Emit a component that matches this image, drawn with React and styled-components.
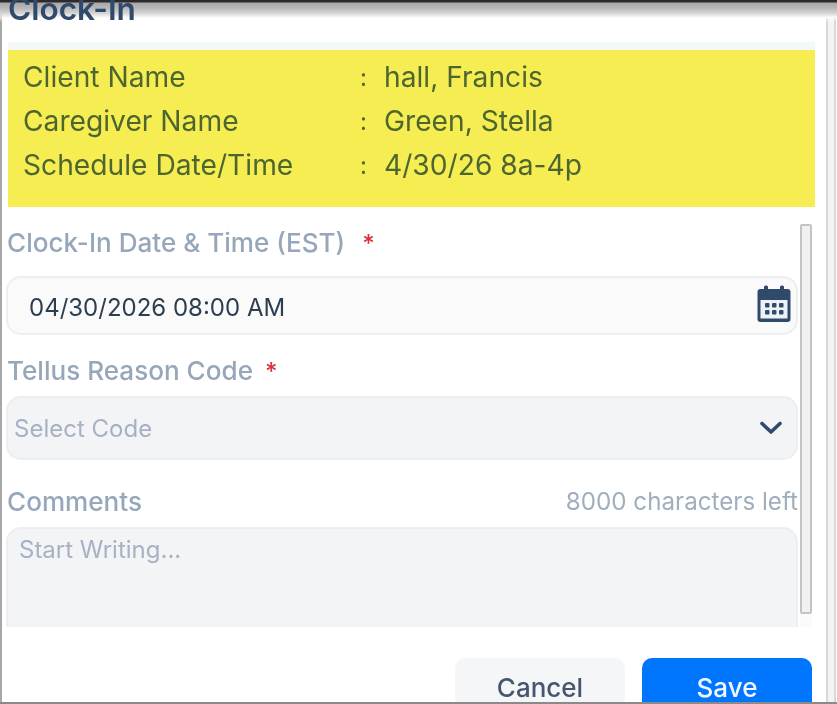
import React from "react";
import styled, { createGlobalStyle } from "styled-components";

const Global = createGlobalStyle`
  html, body { margin: 0; padding: 0; background: #fff; }
  * { box-sizing: border-box; }
  body { font-family: Inter, "Liberation Sans", sans-serif; overflow: hidden; }
`;

const Screen = styled.div`
  position: relative;
  width: 837px;
  height: 704px;
  overflow: hidden;
  display: flex;
  background: #fff;
  filter: blur(0.55px);
`;
const TopShade = styled.div`
  position: absolute;
  inset: 0 0 auto 0;
  height: 22px;
  background: linear-gradient(#2b2b2b 0, #2b2b2b 2px, #a8a8a8 3px, #b8b8b8 8px, #d4d4d4 13px, rgba(255,255,255,0.6) 18px, rgba(255,255,255,0) 22px);
  pointer-events: none;
`;
const BottomLine = styled.div`
  position: absolute;
  inset: auto 0 0 0;
  height: 2px;
  background: #8a8a8a;
`;
const Dialog = styled.div`
  width: 826px;
  height: 704px;
  flex: none;
  border-left: 2px solid #a8a8a8;
  display: flex;
  flex-direction: column;
`;
const OuterBar = styled.div`
  flex: 1;
  margin-top: 18px;
  border-left: 2px solid #d8d8d8;
  border-right: 2px solid #d8d8d8;
  background: #f4f4f4;
  margin-right: 1px;
`;
const Title = styled.h2`
  margin: -9px 0 9px 6px;
  height: 50px;
  flex: none;
  font-size: 31.5px;
  line-height: 36px;
  font-weight: 600;
  color: #2f4a6b;
  position: relative;
  z-index: 1;
`;
const Summary = styled.div`
  margin: 0 11px 0 6px;
  height: 157px;
  flex: none;
  padding: 5px 15px;
  background: #f6ed52;
  box-shadow: 0 -8px 0 #f5f8f8;
  display: grid;
  grid-template-columns: 337px 24px 1fr;
  grid-auto-rows: 44px;
  align-items: center;
  font-size: 28.2px;
  color: #4d6630;
`;
const Colon = styled.span`
  font-size: 24px;
`;
const Body = styled.div`
  height: 420px;
  flex: none;
  overflow: hidden;
  display: flex;
`;
const Form = styled.div`
  width: 796px;
  padding: 16px 0 0 4px;
  display: flex;
  flex-direction: column;
  flex: none;
`;
const LabelRow = styled.div`
  display: flex;
  justify-content: space-between;
  align-items: center;
  height: 38px;
  flex: none;
  padding: 0 0 0 1px;
  font-size: 26.1px;
  font-weight: 500;
  color: #97a7ba;
  white-space: nowrap;
`;
const Required = styled.span`
  color: #d6333f;
  margin-left: ${(p) => p.$gap}px;
  font-size: 24px;
`;
const Remaining = styled.span`
  font-size: 24.2px;
  font-weight: 400;
  color: #a1aebd;
`;
const Field = styled.div`
  height: ${(p) => p.$h}px;
  margin-top: ${(p) => p.$top}px;
  margin-bottom: ${(p) => p.$bottom}px;
  flex: none;
  border: 2px solid #eceef1;
  border-radius: 15px;
  background: ${(p) => p.$bg};
  display: flex;
  align-items: center;
  justify-content: space-between;
  padding: ${(p) => p.$nudge}px ${(p) => p.$right}px 0 ${(p) => p.$left}px;
  font-size: 24px;
  color: ${(p) => p.$color};
`;
const TextArea = styled.div`
  height: 130px;
  margin-top: 7px;
  flex: none;
  border: 2px solid #eceef1;
  border-radius: 15px;
  background: #f3f4f6;
  padding: 6px 11px;
  font-size: 24px;
  color: #a6b2c4;
`;
const Track = styled.div`
  width: 12px;
  height: 403px;
  margin-top: 17px;
  margin-left: 2px;
  flex: none;
  display: flex;
  flex-direction: column;
  background: #fbfbfb;
`;
const Thumb = styled.div`
  height: 390px;
  border: 2px solid #c4c4c4;
  border-radius: 2px;
  background: #f1f1f1;
`;
const Footer = styled.div`
  display: flex;
  flex: none;
  justify-content: flex-end;
  gap: 17px;
  margin: 31px 14px 0 0;
`;
const Button = styled.button`
  width: 170px;
  height: 60px;
  flex: none;
  border: 0;
  border-radius: 10px;
  padding: 0 0 2px;
  font-family: inherit;
  font-size: 26px;
  font-weight: 500;
  background: ${(p) => (p.$primary ? "#0076ff" : "#f5f6f7")};
  color: ${(p) => (p.$primary ? "#f2f7ff" : "#45566e")};
`;
const CalendarSvg = styled.svg`
  margin-bottom: 8px;
  flex: none;
`;

const CalendarIcon = () => (
  <CalendarSvg width="34" height="38" viewBox="0 0 34 38" aria-hidden="true">
    <rect x="0.5" y="4" width="33" height="33" rx="3" fill="#2f4a6b" />
    <rect x="7" y="0.5" width="4" height="7" rx="1.5" fill="#2f4a6b" />
    <rect x="23" y="0.5" width="4" height="7" rx="1.5" fill="#2f4a6b" />
    <rect x="3.5" y="15" width="27" height="18.5" fill="#eef2f6" />
    {[8, 15, 22].map((x) =>
      [18, 25].map((y) => <rect key={`${x}-${y}`} x={x} y={y} width="4.5" height="4.5" rx="1" fill="#2f4a6b" />)
    )}
  </CalendarSvg>
);

const ChevronIcon = () => (
  <svg width="22" height="14" viewBox="0 0 22 14" aria-hidden="true">
    <path d="M2 2.5 L11 11 L20 2.5" fill="none" stroke="#2f4a6b" strokeWidth="3.6" strokeLinecap="round" strokeLinejoin="round" />
  </svg>
);

const rows = [
  ["Client Name", "hall, Francis"],
  ["Caregiver Name", "Green, Stella"],
  ["Schedule Date/Time", "4/30/26 8a-4p"],
];

export default function App() {
  return (
    <Screen>
      <Global />
      <Dialog>
        <Title>Clock-In</Title>
        <Summary>
          {rows.map(([k, v]) => (
            <React.Fragment key={k}>
              <span>{k}</span>
              <Colon>:</Colon>
              <span>{v}</span>
            </React.Fragment>
          ))}
        </Summary>
        <Body>
          <Form>
            <LabelRow>
              <span>Clock-In Date &amp; Time (EST)<Required $gap={17}>*</Required></span>
            </LabelRow>
            <Field $h={59} $top={15} $bottom={16} $nudge={4} $bg="#fafafb" $left={21} $right={5} $color="#2c3e50">
              04/30/2026 08:00 AM
              <CalendarIcon />
            </Field>
            <LabelRow>
              <span>Tellus Reason Code<Required $gap={12}>*</Required></span>
            </LabelRow>
            <Field $h={64} $top={7} $bottom={22} $nudge={0} $bg="#f3f4f6" $left={6} $right={14} $color="#a6b2c4">
              Select Code
              <ChevronIcon />
            </Field>
            <LabelRow>
              <span>Comments</span>
              <Remaining>8000 characters left</Remaining>
            </LabelRow>
            <TextArea>Start Writing...</TextArea>
          </Form>
          <Track>
            <Thumb />
          </Track>
        </Body>
        <Footer>
          <Button>Cancel</Button>
          <Button $primary>Save</Button>
        </Footer>
      </Dialog>
      <OuterBar />
      <TopShade />
      <BottomLine />
    </Screen>
  );
}
